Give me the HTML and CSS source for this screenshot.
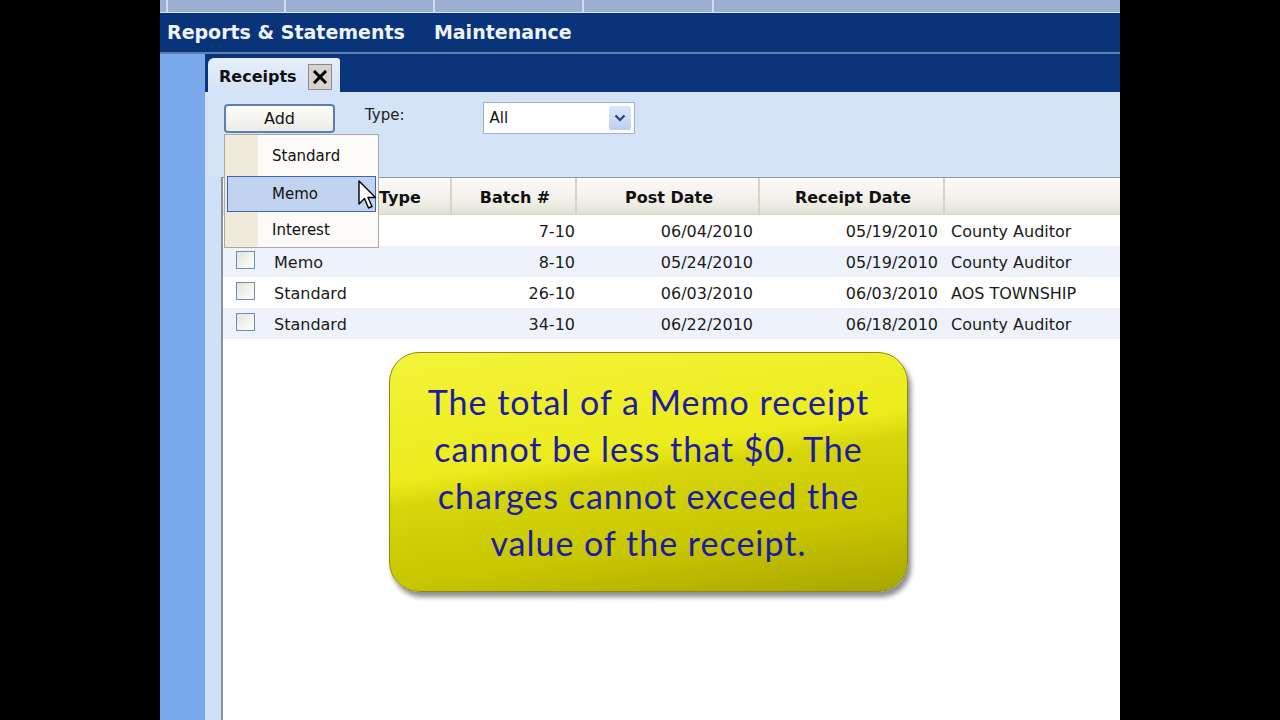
FILE: index.html
```html
<!DOCTYPE html>
<html lang="en">

<head>
    <meta charset="UTF-8">
    <meta name="viewport" content="width=device-width, initial-scale=1.0">
    <link rel="stylesheet" href="styles.css">
</head>

<body>
    <div id="app">
        <div class="strip">
            <span class="strip-tab t1"></span>
            <span class="strip-tab t2"></span>
            <span class="strip-tab t3"></span>
            <span class="strip-tab t4"></span>
        </div>

        <div class="nav">
            <span class="nav-item">Reports &amp; Statements</span>
            <span class="nav-item">Maintenance</span>
        </div>

        <div class="main">
            <div class="sidebar"></div>

            <div class="workspace">
                <div class="tabbar">
                    <div class="tab">
                        <span class="tab-title">Receipts</span>
                        <span class="tab-close">
                            <svg width="14" height="14" viewBox="0 0 14 14">
                                <path d="M2 2 L12 12 M12 2 L2 12" stroke="#000" stroke-width="3" stroke-linecap="square"/>
                            </svg>
                        </span>
                    </div>
                </div>

                <div class="toolbar">
                    <button class="add-btn">Add</button>
                    <label class="type-label">Type:</label>
                    <div class="select">
                        <span>All</span>
                        <span class="select-arrow">
                            <svg width="12" height="8" viewBox="0 0 12 8">
                                <path d="M1.5 1.5 L6 6 L10.5 1.5" fill="none" stroke="#2a3f7a" stroke-width="2.2"/>
                            </svg>
                        </span>
                    </div>
                </div>

                <div class="content">
                    <div class="gutter"></div>
                    <div class="grid">
                        <div class="row header">
                            <div class="cell"></div>
                            <div class="cell type-head">Type</div>
                            <div class="cell center">Batch #</div>
                            <div class="cell center">Post Date</div>
                            <div class="cell center">Receipt Date</div>
                            <div class="cell"></div>
                        </div>

                        <!-- first row's check box and type sit under the open menu -->
                        <div class="row">
                            <div class="cell"></div>
                            <div class="cell"></div>
                            <div class="cell right batch">7-10</div>
                            <div class="cell right">06/04/2010</div>
                            <div class="cell right">05/19/2010</div>
                            <div class="cell">County Auditor</div>
                        </div>
                        <div class="row alt">
                            <div class="cell"><span class="check"></span></div>
                            <div class="cell">Memo</div>
                            <div class="cell right batch">8-10</div>
                            <div class="cell right">05/24/2010</div>
                            <div class="cell right">05/19/2010</div>
                            <div class="cell">County Auditor</div>
                        </div>
                        <div class="row">
                            <div class="cell"><span class="check"></span></div>
                            <div class="cell">Standard</div>
                            <div class="cell right batch">26-10</div>
                            <div class="cell right">06/03/2010</div>
                            <div class="cell right">06/03/2010</div>
                            <div class="cell">AOS TOWNSHIP</div>
                        </div>
                        <div class="row alt">
                            <div class="cell"><span class="check"></span></div>
                            <div class="cell">Standard</div>
                            <div class="cell right batch">34-10</div>
                            <div class="cell right">06/22/2010</div>
                            <div class="cell right">06/18/2010</div>
                            <div class="cell">County Auditor</div>
                        </div>
                    </div>
                </div>
            </div>
        </div>

        <!-- popup menu opened from the Add button -->
        <div class="menu">
            <div class="menu-item">Standard</div>
            <div class="menu-item active">Memo</div>
            <div class="menu-item">Interest</div>
        </div>

        <svg class="cursor" width="20" height="32" viewBox="0 0 20 32">
            <path d="M1 1 L1 24 L6.5 18.5 L10.5 28 L14 26.5 L10 17.5 L17.5 17.5 Z" fill="#fff" stroke="#000" stroke-width="1.4" stroke-linejoin="round"/>
        </svg>

        <div class="callout">
            The total of a Memo receipt cannot be less that $0. The charges cannot exceed the value of the receipt.
        </div>
    </div>
</body>

</html>
```

FILE: styles.css
```css
body {
    margin: 0;
    background-color: #000;
    font-family: "DejaVu Sans", sans-serif;
}

#app {
    position: relative;
    width: 960px;
    height: 720px;
    margin-left: 160px;
    overflow: hidden;
    display: flex;
    flex-direction: column;
}

.strip {
    position: relative;
    height: 12px;
    background-color: #9bafd2;
    border-bottom: 1px solid #d6e2f4;
}

.strip-tab {
    position: absolute;
    top: 0;
    height: 12px;
    border-left: 2px solid #d0dcf0;
}

.t1 { left: 6px; }
.t2 { left: 124px; }
.t3 { left: 273px; }
.t4 { left: 422px; }
.t4::after {
    content: "";
    position: absolute;
    left: 128px;
    top: 0;
    height: 12px;
    border-left: 2px solid #d0dcf0;
}

.nav {
    height: 39px;
    background-color: #0a347a;
    border-bottom: 2px solid #5f7fb2;
    display: flex;
    align-items: center;
    gap: 29px;
    padding-left: 7px;
}

.nav-item {
    color: #eef3fb;
    font-weight: bold;
    font-size: 19px;
    padding-bottom: 2px;
}

.main {
    flex: 1;
    display: flex;
}

.sidebar {
    width: 45px;
    background-color: #79a9ec;
}

.workspace {
    flex: 1;
    display: flex;
    flex-direction: column;
}

.tabbar {
    height: 38px;
    background-color: #0a357b;
    display: flex;
    align-items: flex-end;
    padding-left: 3px;
}

.tab {
    width: 132px;
    height: 34px;
    box-sizing: border-box;
    background: linear-gradient(#e6eefa, #d4e2f6);
    border-radius: 6px 3px 0 0;
    display: flex;
    align-items: center;
    padding: 3px 0 0 11px;
    gap: 11px;
}

.tab-title {
    font-weight: bold;
    font-size: 16px;
    color: #111;
}

.tab-close {
    width: 24px;
    height: 26px;
    box-sizing: border-box;
    background-color: #d6d3cc;
    border: 1px solid #8c8c8c;
    display: flex;
    align-items: center;
    justify-content: center;
}

.toolbar {
    height: 85px;
    background-color: #d4e3f8;
    display: flex;
    align-items: flex-start;
}

.add-btn {
    margin: 12px 0 0 19px;
    width: 111px;
    height: 29px;
    font-family: "DejaVu Sans", sans-serif;
    font-size: 16px;
    color: #111;
    background: linear-gradient(#fdfdfb, #ecebe4);
    border: 2px solid #5f7fae;
    border-radius: 4px;
}

.type-label {
    margin: 14px 0 0 30px;
    font-size: 15px;
    color: #222;
}

.select {
    margin: 10px 0 0 78px;
    width: 152px;
    height: 32px;
    box-sizing: border-box;
    background-color: #fff;
    border: 1px solid #9fb1cb;
    display: flex;
    align-items: center;
    justify-content: space-between;
    padding: 0 3px 0 6px;
    font-size: 15px;
    color: #111;
}

.select-arrow {
    width: 22px;
    height: 24px;
    background: linear-gradient(#dae6fb, #bcd0f4);
    border-radius: 2px;
    display: flex;
    align-items: center;
    justify-content: center;
}

.content {
    flex: 1;
    display: flex;
}

.gutter {
    width: 16px;
    background-color: #d0e0f6;
}

.grid {
    flex: 1;
    background-color: #fff;
    border-left: 2px solid #8c9098;
}

.row {
    display: grid;
    grid-template-columns: 41px 188px 125px 183px 185px 1fr;
    height: 31px;
    align-items: center;
    font-size: 16px;
    color: #1a1a1a;
}

.row.alt {
    background-color: #eef3fb;
}

.row.header {
    height: 38px;
    background: linear-gradient(#fbfbf8, #efeee6 70%, #e2e0d3);
    border-top: 1px solid #8f99a8;
    border-bottom: 1px solid #d6d4c8;
    box-sizing: border-box;
    font-weight: bold;
    font-size: 16px;
    color: #111;
}

.header .cell {
    height: 100%;
    display: flex;
    align-items: center;
    border-right: 2px solid #d8d5c8;
    box-sizing: border-box;
}

.header .cell:last-child {
    border-right: none;
}

.header .center {
    justify-content: center;
}

.cell {
    padding: 2px 7px 0 10px;
    white-space: nowrap;
    overflow: hidden;
}

.header .type-head {
    padding-left: 115px;
}

.row .right {
    text-align: right;
}

.row .batch {
    padding-right: 2px;
}

.row .cell:last-child {
    padding-left: 6px;
}

.check {
    display: block;
    width: 19px;
    height: 18px;
    margin: 0 0 6px 3px;
    box-sizing: border-box;
    border: 1px solid #6f8fb0;
    background: linear-gradient(135deg, #e4e4dc, #fff);
}

.menu {
    position: absolute;
    left: 64px;
    top: 134px;
    width: 155px;
    height: 114px;
    box-sizing: border-box;
    padding: 3px 2px;
    background: linear-gradient(to right, #efeada 33px, #fcfbf8 33px);
    border: 1px solid #a9a9a9;
    font-size: 15px;
    color: #111;
}

.menu-item {
    height: 37px;
    line-height: 37px;
    padding-left: 45px;
    box-sizing: border-box;
}

.menu-item.active {
    height: 36px;
    margin: 1px 0 0;
    background-color: #c1d3ef;
    border: 1px solid #3f64a8;
    line-height: 34px;
    padding-left: 44px;
}

.cursor {
    position: absolute;
    left: 198px;
    top: 180px;
}

.callout {
    position: absolute;
    left: 229px;
    top: 352px;
    width: 519px;
    height: 240px;
    box-sizing: border-box;
    padding: 25px 24px 0;
    border-radius: 30px;
    border: 1px solid #8a8a10;
    background: linear-gradient(172deg, #f3f33a 0%, #ecec1c 42%, #d6d60a 50%, #c8c600 75%, #a8a600 100%);
    box-shadow: 3px 5px 5px rgba(0, 0, 0, 0.45);
    font-family: "Lato", sans-serif;
    font-size: 34px;
    line-height: 47px;
    letter-spacing: 1px;
    text-align: center;
    color: #1c1ca0;
}
```
